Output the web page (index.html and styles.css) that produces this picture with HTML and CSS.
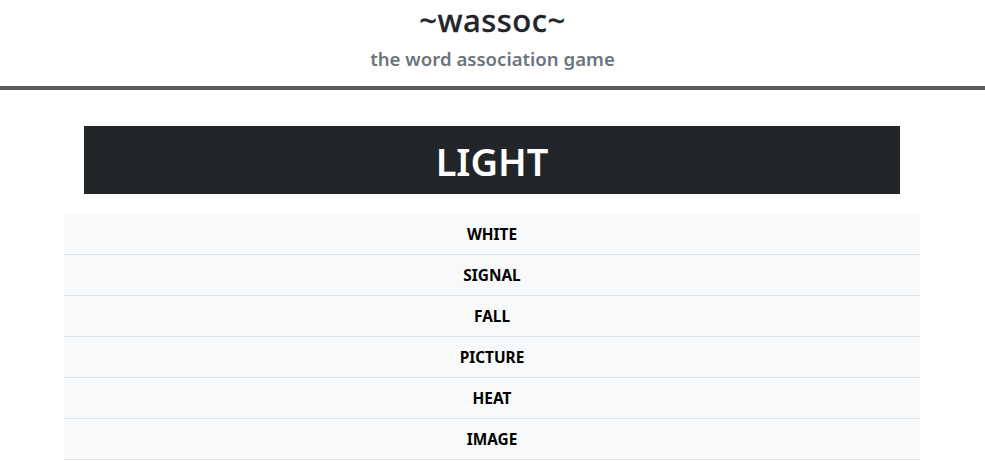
FILE: index.html
```html
<!DOCTYPE html>
<html>
<head>
<meta charset="utf-8">
<link rel="stylesheet" href="styles.css">
</head>
<body>
<header class="site-header">
  <h1 class="title">~wassoc~</h1>
  <p class="subtitle">the word association game</p>
</header>
<main class="container">
  <div class="word-box"><h2 class="word">LIGHT</h2></div>
  <ul class="assoc-list">
    <li class="assoc">WHITE</li>
    <li class="assoc">SIGNAL</li>
    <li class="assoc">FALL</li>
    <li class="assoc">PICTURE</li>
    <li class="assoc">HEAT</li>
    <li class="assoc">IMAGE</li>
  </ul>
</main>
</body>
</html>
```
FILE: styles.css
```css
html, body {
  margin: 0;
  padding: 0;
  background: #fff;
  font-family: "Noto Sans", "Open Sans", sans-serif;
  color: #212529;
}
.site-header {
  text-align: center;
  border-bottom: 4px solid #5c5c5c;
  padding: 2px 0 14px;
}
.title {
  margin: 0;
  font-size: 31px;
  font-weight: 500;
  line-height: 36px;
  letter-spacing: 0.5px;
  -webkit-text-stroke: 0.3px #212529;
}
.subtitle {
  margin: 8px 0 0;
  font-size: 18.6px;
  font-weight: 600;
  color: #6c757d;
  line-height: 26px;
}
.container {
  width: 856px;
  margin: 36px auto 0;
  padding-right: 1px;
}
.word-box {
  margin: 0 20px;
  background: #212529;
  height: 68px;
  display: flex;
  align-items: center;
  justify-content: center;
}
.word {
  margin: 2px 0 0;
  color: #fff;
  font-size: 38px;
  font-weight: 600;
  line-height: 1;
}
.assoc-list {
  list-style: none;
  margin: 20px 0 0;
  padding: 0;
}
.assoc {
  background: #f8f9fa;
  border-bottom: 1px solid #dee2e6;
  height: 40px;
  line-height: 42px;
  text-align: center;
  font-size: 15.4px;
  font-weight: 700;
  color: #000;
}
```
